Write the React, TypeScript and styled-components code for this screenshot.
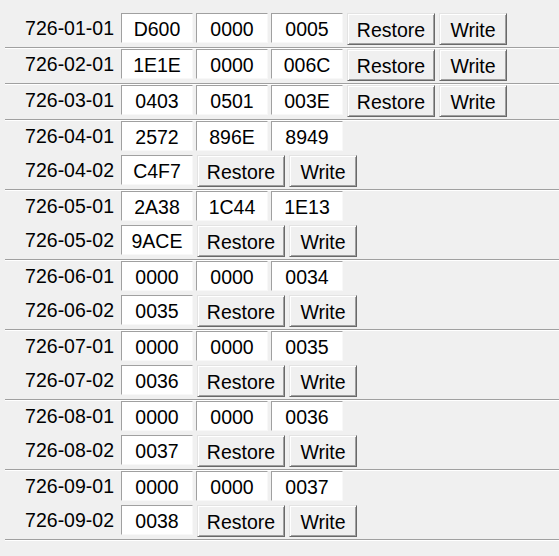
import React from "react";
import styled, { createGlobalStyle } from "styled-components";

const Global = createGlobalStyle`
  html, body {
    margin: 0;
    padding: 0;
    background: #f0f0f0;
  }
  body {
    font-family: "Liberation Sans", Arial, sans-serif;
    font-size: 19.5px;
    color: #000;
  }
`;

const Page = styled.div`
  width: 559px;
  height: 556px;
  padding-top: 13px;
  box-sizing: border-box;
  background: #f0f0f0;
  overflow: hidden;
`;

const Group = styled.div`
  display: flex;
  flex-direction: column;
  gap: 4px;
  padding-bottom: 2px;
`;

const Separator = styled.div`
  margin-left: 5px;
  height: 0;
  border-top: 1px solid #a0a0a0;
  border-bottom: 1px solid #ffffff;
`;

const Row = styled.div`
  display: flex;
  align-items: flex-start;
`;

const Label = styled.div`
  width: 114px;
  margin-right: 7px;
  height: 30px;
  line-height: 31px;
  text-align: right;
  white-space: nowrap;
`;

const Entry = styled.div`
  box-sizing: border-box;
  width: 72px;
  height: 30px;
  margin-right: 3px;
  line-height: 30px;
  text-align: center;
  background: #ffffff;
  border-top: 1px solid #a0a0a0;
  border-left: 1px solid #a0a0a0;
  border-right: 1px solid #f8f8f8;
  border-bottom: 1px solid #f8f8f8;
  overflow: hidden;
`;

const Button = styled.button<{ $w: number }>`
  box-sizing: border-box;
  width: ${(p) => p.$w}px;
  height: 32px;
  margin-left: 1px;
  margin-right: 3px;
  padding: 2px 0 0 0;
  font-family: "Liberation Sans", Arial, sans-serif;
  font-size: 19.5px;
  color: #000;
  background: #f0f0f0;
  border-style: solid;
  border-width: 1px;
  border-color: #e3e3e3 #696969 #696969 #e3e3e3;
  box-shadow: inset 1px 1px 0 #ffffff, inset -1px -1px 0 #a0a0a0;
  line-height: 26px;
  cursor: default;
`;

type RowData = { label: string; values: string[]; buttons: boolean };
type GroupData = RowData[];

const groups: GroupData[] = [
  [{ label: "726-01-01", values: ["D600", "0000", "0005"], buttons: true }],
  [{ label: "726-02-01", values: ["1E1E", "0000", "006C"], buttons: true }],
  [{ label: "726-03-01", values: ["0403", "0501", "003E"], buttons: true }],
  [
    { label: "726-04-01", values: ["2572", "896E", "8949"], buttons: false },
    { label: "726-04-02", values: ["C4F7"], buttons: true },
  ],
  [
    { label: "726-05-01", values: ["2A38", "1C44", "1E13"], buttons: false },
    { label: "726-05-02", values: ["9ACE"], buttons: true },
  ],
  [
    { label: "726-06-01", values: ["0000", "0000", "0034"], buttons: false },
    { label: "726-06-02", values: ["0035"], buttons: true },
  ],
  [
    { label: "726-07-01", values: ["0000", "0000", "0035"], buttons: false },
    { label: "726-07-02", values: ["0036"], buttons: true },
  ],
  [
    { label: "726-08-01", values: ["0000", "0000", "0036"], buttons: false },
    { label: "726-08-02", values: ["0037"], buttons: true },
  ],
  [
    { label: "726-09-01", values: ["0000", "0000", "0037"], buttons: false },
    { label: "726-09-02", values: ["0038"], buttons: true },
  ],
];

export default function App() {
  return (
    <>
      <Global />
      <Page>
        {groups.map((g, gi) => (
          <React.Fragment key={gi}>
            <Group>
              {g.map((r) => (
                <Row key={r.label}>
                  <Label>{r.label}</Label>
                  {r.values.map((v, vi) => (
                    <Entry key={vi}>{v}</Entry>
                  ))}
                  {r.buttons && (
                    <>
                      <Button $w={88}>Restore</Button>
                      <Button $w={68}>Write</Button>
                    </>
                  )}
                </Row>
              ))}
            </Group>
            <Separator />
          </React.Fragment>
        ))}
      </Page>
    </>
  );
}
